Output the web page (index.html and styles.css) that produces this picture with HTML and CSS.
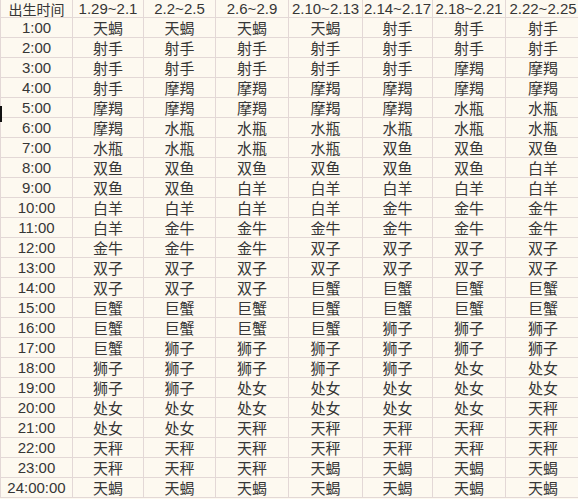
FILE: index.html
```html
<!DOCTYPE html>
<html lang="zh">
<head>
<meta charset="utf-8">
<link rel="stylesheet" href="styles.css">
</head>
<body>
<div class="wrap">
<table class="zodiac">
<colgroup><col class="c0"><col class="c1"><col class="c2"><col class="c3"><col class="c4"><col class="c5"><col class="c6"><col class="c7"></colgroup>
<tr class="head"><td class="zh">出生时间</td><td>1.29~2.1</td><td>2.2~2.5</td><td>2.6~2.9</td><td>2.10~2.13</td><td>2.14~2.17</td><td>2.18~2.21</td><td>2.22~2.25</td></tr>
<tr><td>1:00</td><td>天蝎</td><td>天蝎</td><td>天蝎</td><td>天蝎</td><td>射手</td><td>射手</td><td>射手</td></tr>
<tr><td>2:00</td><td>射手</td><td>射手</td><td>射手</td><td>射手</td><td>射手</td><td>射手</td><td>射手</td></tr>
<tr><td>3:00</td><td>射手</td><td>射手</td><td>射手</td><td>射手</td><td>射手</td><td>摩羯</td><td>摩羯</td></tr>
<tr><td>4:00</td><td>射手</td><td>摩羯</td><td>摩羯</td><td>摩羯</td><td>摩羯</td><td>摩羯</td><td>摩羯</td></tr>
<tr><td>5:00</td><td>摩羯</td><td>摩羯</td><td>摩羯</td><td>摩羯</td><td>摩羯</td><td>水瓶</td><td>水瓶</td></tr>
<tr><td>6:00</td><td>摩羯</td><td>水瓶</td><td>水瓶</td><td>水瓶</td><td>水瓶</td><td>水瓶</td><td>水瓶</td></tr>
<tr><td>7:00</td><td>水瓶</td><td>水瓶</td><td>水瓶</td><td>水瓶</td><td>双鱼</td><td>双鱼</td><td>双鱼</td></tr>
<tr><td>8:00</td><td>双鱼</td><td>双鱼</td><td>双鱼</td><td>双鱼</td><td>双鱼</td><td>双鱼</td><td>白羊</td></tr>
<tr><td>9:00</td><td>双鱼</td><td>双鱼</td><td>白羊</td><td>白羊</td><td>白羊</td><td>白羊</td><td>白羊</td></tr>
<tr><td>10:00</td><td>白羊</td><td>白羊</td><td>白羊</td><td>白羊</td><td>金牛</td><td>金牛</td><td>金牛</td></tr>
<tr><td>11:00</td><td>白羊</td><td>金牛</td><td>金牛</td><td>金牛</td><td>金牛</td><td>金牛</td><td>金牛</td></tr>
<tr><td>12:00</td><td>金牛</td><td>金牛</td><td>金牛</td><td>双子</td><td>双子</td><td>双子</td><td>双子</td></tr>
<tr><td>13:00</td><td>双子</td><td>双子</td><td>双子</td><td>双子</td><td>双子</td><td>双子</td><td>双子</td></tr>
<tr><td>14:00</td><td>双子</td><td>双子</td><td>双子</td><td>巨蟹</td><td>巨蟹</td><td>巨蟹</td><td>巨蟹</td></tr>
<tr><td>15:00</td><td>巨蟹</td><td>巨蟹</td><td>巨蟹</td><td>巨蟹</td><td>巨蟹</td><td>巨蟹</td><td>巨蟹</td></tr>
<tr><td>16:00</td><td>巨蟹</td><td>巨蟹</td><td>巨蟹</td><td>巨蟹</td><td>狮子</td><td>狮子</td><td>狮子</td></tr>
<tr><td>17:00</td><td>巨蟹</td><td>狮子</td><td>狮子</td><td>狮子</td><td>狮子</td><td>狮子</td><td>狮子</td></tr>
<tr><td>18:00</td><td>狮子</td><td>狮子</td><td>狮子</td><td>狮子</td><td>狮子</td><td>处女</td><td>处女</td></tr>
<tr><td>19:00</td><td>狮子</td><td>狮子</td><td>处女</td><td>处女</td><td>处女</td><td>处女</td><td>处女</td></tr>
<tr><td>20:00</td><td>处女</td><td>处女</td><td>处女</td><td>处女</td><td>处女</td><td>处女</td><td>天秤</td></tr>
<tr><td>21:00</td><td>处女</td><td>处女</td><td>天秤</td><td>天秤</td><td>天秤</td><td>天秤</td><td>天秤</td></tr>
<tr><td>22:00</td><td>天秤</td><td>天秤</td><td>天秤</td><td>天秤</td><td>天秤</td><td>天秤</td><td>天秤</td></tr>
<tr><td>23:00</td><td>天秤</td><td>天秤</td><td>天秤</td><td>天蝎</td><td>天蝎</td><td>天蝎</td><td>天蝎</td></tr>
<tr><td>24:00:00</td><td>天蝎</td><td>天蝎</td><td>天蝎</td><td>天蝎</td><td>天蝎</td><td>天蝎</td><td>天蝎</td></tr>
</table>
<span class="mark"></span>
</div>
</body>
</html>
```
FILE: styles.css
```css
html, body {
  margin: 0;
  padding: 0;
  background: #fdf9f0;
  overflow: hidden;
}
.wrap {
  position: relative;
  width: 580px;
}
.zodiac {
  border-collapse: collapse;
  table-layout: fixed;
  width: 580px;
  color: #363636;
  font-family: "Noto Sans CJK SC", sans-serif;
  font-size: 15px;
}
.c0 { width: 72px; }
.c1 { width: 71px; }
.c2 { width: 72px; }
.c3 { width: 73px; }
.c4 { width: 74px; }
.c5 { width: 70px; }
.c6 { width: 73px; }
.c7 { width: 75px; }
.zodiac td {
  height: 19px;
  padding: 0;
  border: 1px solid #e3d8d6;
  text-align: center;
  vertical-align: middle;
  line-height: 19px;
  white-space: nowrap;
  overflow: hidden;
}
.zodiac .head td {
  border-top: none;
  height: 17px;
  line-height: 16px;
  overflow: visible;
}
.zodiac td:first-child,
.zodiac .head td {
  font-family: "Liberation Sans Narrow", "Liberation Sans", Arial, sans-serif;
  font-size: 15px;
}
.zodiac .head td.zh {
  font-family: "Noto Sans CJK SC", sans-serif;
  font-size: 14px;
}
.mark {
  position: absolute;
  left: 0;
  top: 106px;
  width: 2px;
  height: 16px;
  background: #111;
}
```
